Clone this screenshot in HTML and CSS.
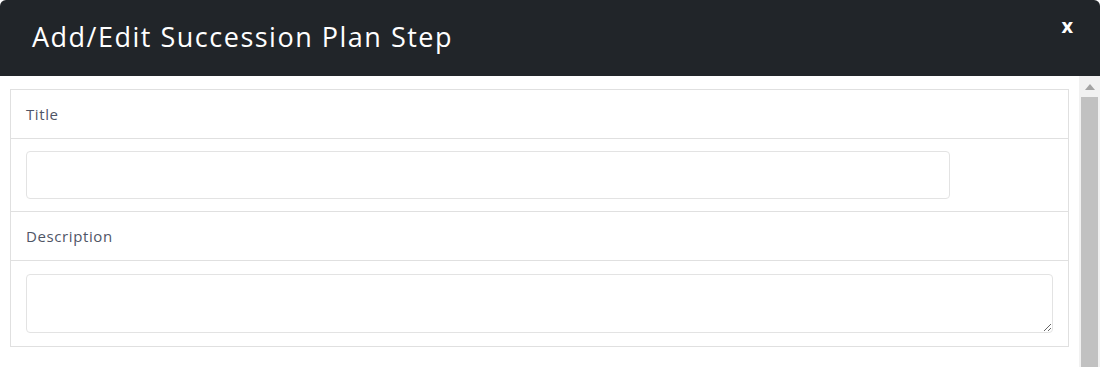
FILE: index.html
```html
<!DOCTYPE html>
<html lang="en">
<head>
  <meta charset="UTF-8">
  <title>Add/Edit Succession Plan Step</title>
  <link rel="stylesheet" href="styles.css">
</head>
<body>
  <div class="modal">
    <!-- Header -->
    <div class="modal-header">
      <h1>Add/Edit Succession Plan Step</h1>
      <span class="close">x</span>
    </div>

    <!-- Body -->
    <div class="modal-body">
      <div class="modal-content">
        <div class="panel">
          <div class="panel-row label-row">
            <label for="title">Title</label>
          </div>
          <div class="panel-row field-row">
            <input type="text" id="title" class="field-narrow">
          </div>
          <div class="panel-row label-row">
            <label for="description">Description</label>
          </div>
          <div class="panel-row field-row area-row">
            <textarea id="description"></textarea>
          </div>
        </div>
      </div>

      <!-- Scrollbar -->
      <div class="scroll-track">
        <span class="scroll-arrow"></span>
        <span class="scroll-thumb"></span>
      </div>
    </div>
  </div>
</body>
</html>
```

FILE: styles.css
```css
* {
  margin: 0;
  padding: 0;
  box-sizing: border-box;
}

body {
  font-family: "Open Sans", "Liberation Sans", sans-serif;
  background-color: #ffffff;
  overflow: hidden;
}

.modal {
  width: 1100px;
}

.modal-header {
  height: 76px;
  background-color: #212529;
  border-radius: 6px 6px 0 0;
  display: flex;
  justify-content: space-between;
  align-items: flex-start;
  padding: 0 27px 0 32px;
  color: #ffffff;
}

.modal-header h1 {
  font-size: 27px;
  font-weight: 400;
  letter-spacing: 1.5px;
  margin-top: 18px;
}

.close {
  font-size: 20px;
  font-weight: 700;
  margin-top: 12px;
  cursor: pointer;
}

.modal-body {
  height: 291px;
  display: flex;
}

.modal-content {
  flex: 1;
  padding: 13px 10px 0 10px;
  overflow: hidden;
}

/* Barre de défilement */
.scroll-track {
  width: 21px;
  background-color: #f1f1f1;
  display: flex;
  flex-direction: column;
  align-items: center;
}

.scroll-arrow {
  width: 0;
  height: 0;
  margin-top: 8px;
  border-left: 5px solid transparent;
  border-right: 5px solid transparent;
  border-bottom: 6px solid #a3a3a3;
}

.scroll-thumb {
  flex: 1;
  width: 17px;
  margin-top: 7px;
  background-color: #c1c1c1;
}

.panel {
  border: 1px solid #e0e0e0;
}

.panel-row {
  border-bottom: 1px solid #e0e0e0;
  padding: 0 15px;
}

.panel-row:last-child {
  border-bottom: none;
}

.label-row {
  height: 49px;
  display: flex;
  align-items: center;
}

label {
  font-size: 15px;
  color: #4f5566;
  letter-spacing: 0.6px;
}

.field-row {
  padding-top: 12px;
  padding-bottom: 12px;
}

.area-row {
  padding-top: 13px;
  padding-bottom: 13px;
}

input[type="text"], textarea {
  display: block;
  width: 100%;
  border: 1px solid #e3e3e3;
  border-radius: 4px;
  font-family: inherit;
  font-size: 14px;
  padding: 6px 12px;
  outline: none;
}

input[type="text"] {
  height: 48px;
}

.field-narrow {
  width: 90% !important;
}

textarea {
  height: 59px;
  resize: vertical;
}
```
